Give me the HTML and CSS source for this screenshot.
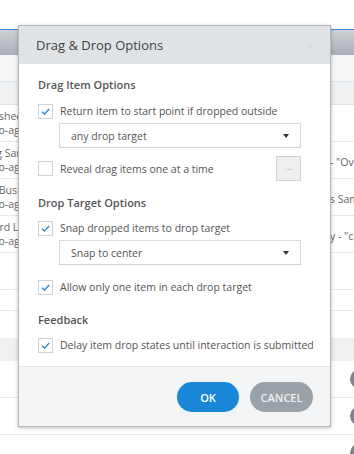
FILE: index.html
```html
<!DOCTYPE html>
<html>
  <head>
    <meta charset="UTF-8">
    <link rel="stylesheet" href="styles.css">
  </head>
  <body>
    <div class="page">
      <div class="masthead"></div>
      <div class="grid-head"></div>
      <div class="filter-row"></div>
      <div class="sub-row"></div>
      <div class="row">
        <div class="cell-left"><span>Timesheet</span><span>Demo-ago</span></div>
        <div class="cell-right"></div>
      </div>
      <div class="row">
        <div class="cell-left"><span>Drag Sam</span><span>Demo-ago</span></div>
        <div class="cell-right">- "Overview"</div>
      </div>
      <div class="row">
        <div class="cell-left"><span>Busin</span><span>Demo-ago</span></div>
        <div class="cell-right">s Sample</div>
      </div>
      <div class="row">
        <div class="cell-left"><span>Word Lis</span><span>Demo-ago</span></div>
        <div class="cell-right">y - "course"</div>
      </div>
      <div class="row"></div>
      <div class="row row-short"></div>
      <div class="row row-blank"></div>
      <div class="group-band"></div>
      <div class="row"><span class="avatar"></span></div>
      <div class="row"><span class="avatar"></span></div>
      <div class="row"><span class="avatar"></span></div>
    </div>

    <div class="dialog">
      <div class="dialog-header">
        <span class="dialog-title">Drag &amp; Drop Options</span>
        <span class="dialog-close">&times;</span>
      </div>
      <div class="dialog-body">
        <div class="section-title">Drag Item Options</div>
        <label class="check-row">
          <span class="checkbox checked">
            <svg viewBox="0 0 15 15"><polyline points="3.5,7.8 6.3,10.5 11.8,4.6" /></svg>
          </span>
          <span>Return item to start point if dropped outside</span>
        </label>
        <div class="select">
          <span>any drop target</span>
          <span class="caret"></span>
        </div>
        <div class="check-row reveal-row">
          <span class="checkbox"></span>
          <span>Reveal drag items one at a time</span>
          <button class="more-btn">...</button>
        </div>

        <div class="section-title section-gap">Drop Target Options</div>
        <label class="check-row">
          <span class="checkbox checked">
            <svg viewBox="0 0 15 15"><polyline points="3.5,7.8 6.3,10.5 11.8,4.6" /></svg>
          </span>
          <span>Snap dropped items to drop target</span>
        </label>
        <div class="select">
          <span>Snap to center</span>
          <span class="caret"></span>
        </div>
        <label class="check-row allow-row">
          <span class="checkbox checked">
            <svg viewBox="0 0 15 15"><polyline points="3.5,7.8 6.3,10.5 11.8,4.6" /></svg>
          </span>
          <span>Allow only one item in each drop target</span>
        </label>

        <div class="section-title feedback-gap">Feedback</div>
        <label class="check-row">
          <span class="checkbox checked">
            <svg viewBox="0 0 15 15"><polyline points="3.5,7.8 6.3,10.5 11.8,4.6" /></svg>
          </span>
          <span>Delay item drop states until interaction is submitted</span>
        </label>
      </div>
      <div class="dialog-footer">
        <button class="btn btn-primary">OK</button>
        <button class="btn btn-default">CANCEL</button>
      </div>
    </div>
  </body>
</html>
```
FILE: styles.css
```css
html, body {
  width: 100%;
  height: 100%;
  margin: 0;
  padding: 0;
  font-family: "Open Sans", "Noto Sans", Arial, sans-serif;
  font-size: 10.5px;
  color: #555;
  background-color: #fff;
  overflow: hidden;
}
* {
  box-sizing: border-box;
}
.page {
  width: 354px;
  height: 454px;
  display: flex;
  flex-direction: column;
}
.masthead {
  height: 30px;
  flex: none;
  border-bottom: 1px solid #3b8fdc;
}
.grid-head {
  height: 25px;
  flex: none;
  background: linear-gradient(#cdd1d5, #aab1b7);
}
.filter-row {
  height: 27px;
  flex: none;
  background: #f4f6f8;
  border-bottom: 1px solid #e2e5e8;
}
.sub-row {
  height: 23px;
  flex: none;
  background: #eff1f3;
  border-bottom: 1px solid #dfe2e5;
}
.row {
  height: 37px;
  flex: none;
  display: flex;
  align-items: center;
  border-bottom: 1px solid #e6e8eb;
}
.row-short {
  height: 21px;
}
.row-blank {
  height: 27px;
  border-bottom: none;
}
.group-band {
  height: 23px;
  flex: none;
  background: #eef0f2;
}
.cell-left {
  width: 26px;
  display: flex;
  flex-direction: column;
  align-items: flex-end;
  overflow: hidden;
  line-height: 14px;
  color: #666;
}
.cell-left span {
  white-space: nowrap;
}
.cell-right {
  margin-left: auto;
  width: 24px;
  padding-top: 3px;
  white-space: nowrap;
  overflow: hidden;
  color: #666;
}
.avatar {
  margin-left: auto;
  margin-right: -16px;
  width: 20px;
  height: 20px;
  border-radius: 50%;
  background: #7e858b;
}

.dialog {
  position: absolute;
  left: 18px;
  top: 25px;
  width: 313px;
  height: 402px;
  display: flex;
  flex-direction: column;
  background: #fff;
  border: 1px solid #b3b8bc;
  box-shadow: 0 1px 4px rgba(0, 0, 0, .25);
}
.dialog-header {
  height: 38px;
  flex: none;
  display: flex;
  align-items: center;
  justify-content: space-between;
  padding: 0 16px 0 17px;
  background: #dfe3e6;
}
.dialog-title {
  font-size: 13px;
  color: #444;
}
.dialog-close {
  font-size: 15px;
  color: #d3d7db;
}
.dialog-body {
  flex: 1;
  display: flex;
  flex-direction: column;
  padding: 12px 29px 0 19px;
}
.section-title {
  height: 18px;
  line-height: 18px;
  font-size: 11px;
  font-weight: 600;
  color: #555;
}
.section-gap {
  margin-top: 13px;
}
.feedback-gap {
  margin-top: 15px;
}
.check-row {
  height: 18px;
  margin-top: 8px;
  display: flex;
  align-items: center;
  gap: 7px;
  white-space: nowrap;
}
.section-title + .check-row {
  margin-top: 7px;
}
.section-title:first-child + .check-row {
  margin-top: 8px;
}
.reveal-row {
  height: 25px;
}
.allow-row {
  margin-top: 13px;
}
.checkbox {
  width: 15px;
  height: 15px;
  flex: none;
  border: 1px solid #cdd2d6;
  background: #fff;
}
.checkbox svg {
  display: block;
  width: 13px;
  height: 13px;
  fill: none;
  stroke: #2a88d6;
  stroke-width: 1.6;
}
.select {
  height: 25px;
  margin: 3px 0 0 21px;
  padding: 0 11px;
  display: flex;
  align-items: center;
  justify-content: space-between;
  border: 1px solid #d6dadd;
  border-bottom-color: #cdd1d5;
  background: #fff;
}
.caret {
  width: 0;
  height: 0;
  border-left: 3.5px solid transparent;
  border-right: 3.5px solid transparent;
  border-top: 4px solid #333;
}
.more-btn {
  margin-left: auto;
  width: 25px;
  height: 25px;
  padding: 0 0 4px;
  border: 1px solid #cfd3d6;
  background: #efefef;
  color: #aaa;
  font-family: inherit;
  font-size: 9px;
  line-height: 1;
}
.dialog-footer {
  height: 60px;
  flex: none;
  display: flex;
  align-items: center;
  justify-content: flex-end;
  gap: 11px;
  padding: 1px 17px 0 0;
  background: #f3f4f5;
  border-top: 1px solid #e4e7ea;
}
.btn {
  height: 30px;
  width: 63px;
  padding: 0;
  border: none;
  border-radius: 15px;
  font-family: inherit;
  font-size: 11px;
  font-weight: 600;
  cursor: pointer;
}
.btn-primary {
  width: 62px;
  color: #fff;
  background: #1a86d7;
}
.btn-default {
  color: #eef0f2;
  background: #9aa1a7;
}
```
